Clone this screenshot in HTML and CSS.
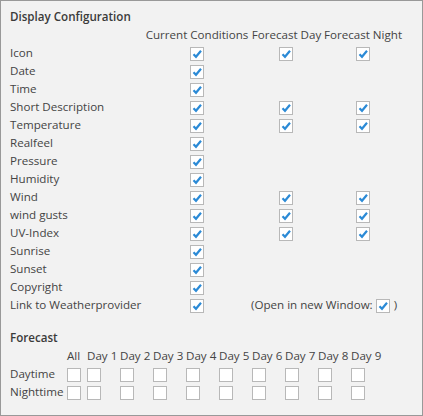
FILE: index.html
```html
<!DOCTYPE html>
<html lang="en">

<head>
    <meta charset="UTF-8">
    <title>Display Configuration</title>
    <link rel="stylesheet" href="styles.css">
</head>

<body>
    <div class="panel">
        <h3 class="title">Display Configuration</h3>
        <table class="config">
            <colgroup>
                <col class="c-label">
                <col class="c-now">
                <col class="c-day">
                <col class="c-night">
            </colgroup>
            <tr class="head">
                <td></td>
                <td>Current Conditions</td>
                <td>Forecast Day</td>
                <td>Forecast Night</td>
            </tr>
            <tr><td>Icon</td><td><span class="box on"></span></td><td><span class="box on"></span></td><td><span class="box on"></span></td></tr>
            <tr><td>Date</td><td><span class="box on"></span></td><td></td><td></td></tr>
            <tr><td>Time</td><td><span class="box on"></span></td><td></td><td></td></tr>
            <tr><td>Short Description</td><td><span class="box on"></span></td><td><span class="box on"></span></td><td><span class="box on"></span></td></tr>
            <tr><td>Temperature</td><td><span class="box on"></span></td><td><span class="box on"></span></td><td><span class="box on"></span></td></tr>
            <tr><td>Realfeel</td><td><span class="box on"></span></td><td></td><td></td></tr>
            <tr><td>Pressure</td><td><span class="box on"></span></td><td></td><td></td></tr>
            <tr><td>Humidity</td><td><span class="box on"></span></td><td></td><td></td></tr>
            <tr><td>Wind</td><td><span class="box on"></span></td><td><span class="box on"></span></td><td><span class="box on"></span></td></tr>
            <tr><td>wind gusts</td><td><span class="box on"></span></td><td><span class="box on"></span></td><td><span class="box on"></span></td></tr>
            <tr><td>UV-Index</td><td><span class="box on"></span></td><td><span class="box on"></span></td><td><span class="box on"></span></td></tr>
            <tr><td>Sunrise</td><td><span class="box on"></span></td><td></td><td></td></tr>
            <tr><td>Sunset</td><td><span class="box on"></span></td><td></td><td></td></tr>
            <tr><td>Copyright</td><td><span class="box on"></span></td><td></td><td></td></tr>
            <tr>
                <td>Link to Weatherprovider</td>
                <td><span class="box on"></span></td>
                <td colspan="2" class="newwin">(Open in new Window: <span class="box on"></span> )</td>
            </tr>
        </table>

        <h3 class="title sub">Forecast</h3>
        <table class="forecast">
            <colgroup>
                <col class="f-label">
                <col class="f-all">
                <col span="9" class="f-day">
            </colgroup>
            <tr>
                <td></td>
                <td>All</td>
                <td>Day 1</td>
                <td>Day 2</td>
                <td>Day 3</td>
                <td>Day 4</td>
                <td>Day 5</td>
                <td>Day 6</td>
                <td>Day 7</td>
                <td>Day 8</td>
                <td>Day 9</td>
            </tr>
            <tr>
                <td>Daytime</td>
                <td><span class="box"></span></td>
                <td><span class="box"></span></td>
                <td><span class="box"></span></td>
                <td><span class="box"></span></td>
                <td><span class="box"></span></td>
                <td><span class="box"></span></td>
                <td><span class="box"></span></td>
                <td><span class="box"></span></td>
                <td><span class="box"></span></td>
                <td><span class="box"></span></td>
            </tr>
            <tr>
                <td>Nighttime</td>
                <td><span class="box"></span></td>
                <td><span class="box"></span></td>
                <td><span class="box"></span></td>
                <td><span class="box"></span></td>
                <td><span class="box"></span></td>
                <td><span class="box"></span></td>
                <td><span class="box"></span></td>
                <td><span class="box"></span></td>
                <td><span class="box"></span></td>
                <td><span class="box"></span></td>
            </tr>
        </table>
    </div>

    <script>
        // tick mark for every checked box
        var tick = '<svg width="12" height="12" viewBox="0 0 12 12"><path d="M2.5 6.2 L5 8.8 L10 2.8" fill="none" stroke="#2b8ad6" stroke-width="2.2" stroke-linejoin="miter"/></svg>';
        document.querySelectorAll(".box.on").forEach(function (item) {
            item.innerHTML = tick;
        });
    </script>
</body>

</html>
```

FILE: styles.css
```css
* {
    margin: 0;
    padding: 0;
    box-sizing: border-box;
}

body {
    font-family: "Open Sans", "DejaVu Sans", sans-serif;
    font-size: 11.6px;
    color: #444;
}

.panel {
    width: 423px;
    height: 416px;
    border: 1px solid #999;
    background-color: #f2f2f2;
    padding: 7px 0 0 9px;
}

.title {
    font-size: 11.6px;
    font-weight: 600;
    line-height: 18px;
    color: #3a3a3a;
}

.title.sub {
    margin-top: 15px;
}

table {
    border-collapse: separate;
    border-spacing: 2px 0;
    margin-left: -2px;
    table-layout: fixed;
}

td {
    height: 18px;
    padding: 0;
    line-height: 18px;
    white-space: nowrap;
    vertical-align: middle;
}

/* display configuration columns */
.config {
    width: 394px;
}

.c-label {
    width: 133px;
}

.c-now {
    width: 104px;
}

.c-day {
    width: 71px;
}

.c-night {
    width: 78px;
}

.config td {
    text-align: center;
    overflow: visible;
}

.config td:first-child {
    text-align: left;
}

.config .newwin {
    text-align: left;
}

.config .box {
    margin-right: 1px;
}

/* forecast columns */
.forecast {
    width: 375px;
}

.f-label {
    width: 55px;
}

.f-all {
    width: 18px;
}

.f-day {
    width: 31px;
}

.forecast td {
    text-align: left;
}

.box {
    display: inline-block;
    width: 14px;
    height: 14px;
    border: 1px solid #b8b8b8;
    background-color: #fff;
    vertical-align: middle;
}

.box svg {
    display: block;
}
```
